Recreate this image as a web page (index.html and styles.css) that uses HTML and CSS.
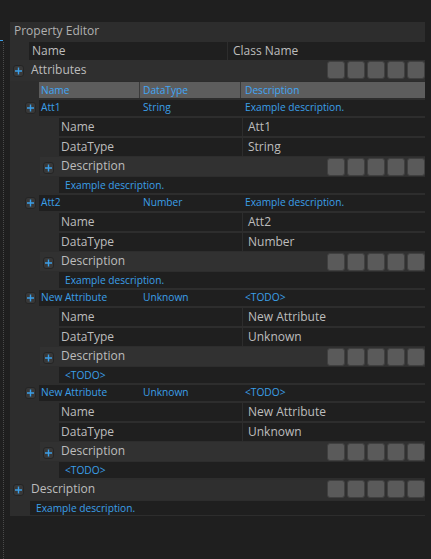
FILE: index.html
```html
<!DOCTYPE html>
<html>
<head>
<meta charset="utf-8">
<link rel="stylesheet" href="styles.css">
</head>
<body>
<div class="page">
  <div class="gutter"><div class="tick"></div><div class="dots"></div></div>
  <div class="panel">
    <div class="title">Property Editor</div>
    <div class="colhead"><div class="ch1">Name</div><div class="ch2">Class Name</div></div>

    <div class="group">
      <span class="plus"><svg width="11" height="12" viewBox="0 0 11 12"><path d="M5.5 2.5v7M2 6h7" stroke="#3b9fe8" stroke-width="1.4" fill="none"/></svg></span>
      <span class="glabel">Attributes</span>
      <div class="btns"><i></i><i></i><i></i><i></i><i></i></div>
    </div>

    <div class="attrs">
      <div class="thead"><div class="tc1">Name</div><div class="tc2">DataType</div><div class="tc3">Description</div></div>

      <div class="attr">
        <div class="arow">
          <span class="plus"><svg width="11" height="12" viewBox="0 0 11 12"><path d="M5.5 2.5v7M2 6h7" stroke="#3b9fe8" stroke-width="1.4" fill="none"/></svg></span>
          <div class="acells"><div class="ac1">Att1</div><div class="ac2">String</div><div class="ac3">Example description.</div></div>
        </div>
        <div class="sub"><div class="sk">Name</div><div class="sv">Att1</div></div>
        <div class="sub"><div class="sk">DataType</div><div class="sv">String</div></div>
        <div class="sdesc">
          <span class="plus"><svg width="11" height="12" viewBox="0 0 11 12"><path d="M5.5 2.5v7M2 6h7" stroke="#3b9fe8" stroke-width="1.4" fill="none"/></svg></span>
          <span class="slabel">Description</span>
          <div class="btns"><i></i><i></i><i></i><i></i><i></i></div>
        </div>
        <div class="sex">Example description.</div>
      </div>

      <div class="attr">
        <div class="arow">
          <span class="plus"><svg width="11" height="12" viewBox="0 0 11 12"><path d="M5.5 2.5v7M2 6h7" stroke="#3b9fe8" stroke-width="1.4" fill="none"/></svg></span>
          <div class="acells"><div class="ac1">Att2</div><div class="ac2">Number</div><div class="ac3">Example description.</div></div>
        </div>
        <div class="sub"><div class="sk">Name</div><div class="sv">Att2</div></div>
        <div class="sub"><div class="sk">DataType</div><div class="sv">Number</div></div>
        <div class="sdesc">
          <span class="plus"><svg width="11" height="12" viewBox="0 0 11 12"><path d="M5.5 2.5v7M2 6h7" stroke="#3b9fe8" stroke-width="1.4" fill="none"/></svg></span>
          <span class="slabel">Description</span>
          <div class="btns"><i></i><i></i><i></i><i></i><i></i></div>
        </div>
        <div class="sex">Example description.</div>
      </div>

      <div class="attr">
        <div class="arow">
          <span class="plus"><svg width="11" height="12" viewBox="0 0 11 12"><path d="M5.5 2.5v7M2 6h7" stroke="#3b9fe8" stroke-width="1.4" fill="none"/></svg></span>
          <div class="acells"><div class="ac1">New Attribute</div><div class="ac2">Unknown</div><div class="ac3">&lt;TODO&gt;</div></div>
        </div>
        <div class="sub"><div class="sk">Name</div><div class="sv">New Attribute</div></div>
        <div class="sub"><div class="sk">DataType</div><div class="sv">Unknown</div></div>
        <div class="sdesc">
          <span class="plus"><svg width="11" height="12" viewBox="0 0 11 12"><path d="M5.5 2.5v7M2 6h7" stroke="#3b9fe8" stroke-width="1.4" fill="none"/></svg></span>
          <span class="slabel">Description</span>
          <div class="btns"><i></i><i></i><i></i><i></i><i></i></div>
        </div>
        <div class="sex">&lt;TODO&gt;</div>
      </div>

      <div class="attr">
        <div class="arow">
          <span class="plus"><svg width="11" height="12" viewBox="0 0 11 12"><path d="M5.5 2.5v7M2 6h7" stroke="#3b9fe8" stroke-width="1.4" fill="none"/></svg></span>
          <div class="acells"><div class="ac1">New Attribute</div><div class="ac2">Unknown</div><div class="ac3">&lt;TODO&gt;</div></div>
        </div>
        <div class="sub"><div class="sk">Name</div><div class="sv">New Attribute</div></div>
        <div class="sub"><div class="sk">DataType</div><div class="sv">Unknown</div></div>
        <div class="sdesc">
          <span class="plus"><svg width="11" height="12" viewBox="0 0 11 12"><path d="M5.5 2.5v7M2 6h7" stroke="#3b9fe8" stroke-width="1.4" fill="none"/></svg></span>
          <span class="slabel">Description</span>
          <div class="btns"><i></i><i></i><i></i><i></i><i></i></div>
        </div>
        <div class="sex">&lt;TODO&gt;</div>
      </div>
    </div>

    <div class="group gdesc">
      <span class="plus"><svg width="11" height="12" viewBox="0 0 11 12"><path d="M5.5 2.5v7M2 6h7" stroke="#3b9fe8" stroke-width="1.4" fill="none"/></svg></span>
      <span class="glabel">Description</span>
      <div class="btns"><i></i><i></i><i></i><i></i><i></i></div>
    </div>
    <div class="gex">Example description.</div>
  </div>
</div>
</body>
</html>
```

FILE: styles.css
```css
html, body {
  margin: 0;
  padding: 0;
  background: #1f1f1f;
}
body {
  width: 431px;
  height: 559px;
  overflow: hidden;
  font-family: "Open Sans", "Noto Sans", sans-serif;
  color: #bdbdbd;
}
.page {
  display: flex;
  height: 559px;
}
.gutter {
  width: 10px;
  padding-top: 40px;
  display: flex;
  flex-direction: column;
  flex: none;
}
.tick {
  width: 3px;
  height: 1px;
  background: #3b9fe8;
}
.dots {
  margin-left: 3px;
  margin-top: 1px;
  flex: 1;
  border-left: 1px dotted #4a4a4a;
}
.panel {
  margin-top: 22px;
  width: 415px;
  align-self: flex-start;
  background: #2d2d2d;
  padding-bottom: 1px;
  display: flex;
  flex-direction: column;
}
.title {
  height: 19px;
  line-height: 17px;
  padding-left: 4px;
  font-size: 12px;
  color: #b0b0b0;
}
.colhead {
  margin-top: 1px;
  margin-left: 19px;
  height: 18px;
  display: flex;
  background: #1f1f1f;
  font-size: 12px;
  line-height: 18px;
}
.ch1 {
  width: 195px;
  padding-left: 3px;
  border-right: 1px solid #2d2d2d;
}
.ch2 {
  padding-left: 5px;
}
.plus {
  width: 11px;
  height: 12px;
  box-sizing: border-box;
  border: 1px solid #252525;
  border-radius: 3px;
  background: #383838;
  display: flex;
  align-items: center;
  justify-content: center;
  flex: none;
}
.plus svg {
  display: block;
  margin: -1px;
}
.group {
  height: 21px;
  display: flex;
  align-items: center;
  padding-left: 3px;
  background: #2f2f2f;
}
.glabel {
  margin-left: 7px;
  font-size: 12px;
  flex: 1;
  line-height: 18px;
  margin-top: -2px;
}
.btns {
  display: flex;
  gap: 2px;
  align-self: flex-start;
  margin-top: 1px;
}
.btns i {
  display: block;
  width: 18px;
  height: 18px;
  box-sizing: border-box;
  background: #5a5a5a;
  border: 1px solid #404040;
  border-radius: 3px;
}
.attrs {
  display: flex;
  flex-direction: column;
}
.thead {
  margin-top: 1px;
  margin-left: 29px;
  height: 16px;
  display: flex;
  background: #5d5d5d;
  color: #41a6f5;
  font-size: 10.2px;
  line-height: 16px;
}
.tc1, .ac1 {
  width: 98px;
  padding-left: 2px;
}
.tc1, .tc2 {
  border-right: 1px solid #3a3a3a;
}
.tc2, .ac2 {
  width: 97px;
  padding-left: 3px;
}
.ac1 { width: 98px; padding-right: 1px; }
.ac2 { padding-right: 1px; }
.tc3, .ac3 {
  padding-left: 4px;
}
.attr {
  display: flex;
  flex-direction: column;
  margin-top: 2px;
}
.arow {
  height: 16px;
  display: flex;
  align-items: center;
  padding-left: 15px;
}
.arow .plus {
  margin-right: 3px;
}
.acells {
  flex: 1;
  height: 16px;
  display: flex;
  background: #1f1f1f;
  color: #3b9fe8;
  font-size: 10.2px;
  line-height: 15px;
}
.sub {
  margin-top: 2px;
  margin-left: 49px;
  height: 18px;
  display: flex;
  background: #1f1f1f;
  font-size: 12px;
  line-height: 17px;
}
.sk {
  width: 181px;
  padding-left: 2px;
  border-right: 1px solid #2d2d2d;
}
.sv {
  padding-left: 5px;
}
.sdesc {
  margin-top: 1px;
  margin-left: 30px;
  height: 19px;
  display: flex;
  align-items: center;
  padding-left: 3px;
  background: #313131;
}
.sdesc .plus {
  margin-top: 2px;
}
.slabel {
  margin-left: 7px;
  flex: 1;
  font-size: 12px;
  line-height: 18px;
  margin-top: -1px;
}
.sdesc .btns {
  margin-top: 1px;
}
.sex {
  margin-top: 1px;
  margin-left: 49px;
  height: 16px;
  padding-left: 6px;
  background: #1f1f1f;
  color: #3b9fe8;
  font-size: 10.2px;
  line-height: 16px;
}
.gdesc {
  margin-top: 2px;
  height: 20px;
}
.gdesc .btns {
  margin-top: 0;
}
.gex {
  margin-top: 1px;
  margin-left: 20px;
  height: 14px;
  padding-left: 6px;
  background: #1f1f1f;
  color: #3b9fe8;
  font-size: 10.2px;
  line-height: 14px;
}
```
